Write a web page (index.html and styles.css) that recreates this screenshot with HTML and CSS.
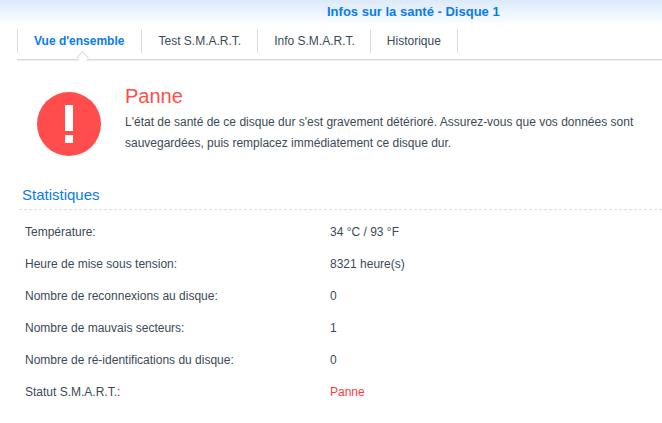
FILE: index.html
```html
<!DOCTYPE html>
<html lang="fr">
<head>
    <meta charset="UTF-8">
    <title>Infos sur la santé - Disque 1</title>
    <link rel="stylesheet" href="styles.css">
</head>
<body>
    <div class="title-bar">Infos sur la santé - Disque 1</div>

    <div class="tabs">
        <div class="tab active">Vue d'ensemble</div>
        <div class="tab">Test S.M.A.R.T.</div>
        <div class="tab">Info S.M.A.R.T.</div>
        <div class="tab">Historique</div>
    </div>

    <div class="alert">
        <svg class="alert-icon" width="64" height="64" viewBox="0 0 64 64">
            <circle cx="32" cy="32" r="32" fill="#ff4d4d"/>
            <rect x="28" y="13" width="8" height="26" fill="#fff"/>
            <rect x="28" y="43" width="8" height="8" fill="#fff"/>
        </svg>
        <div class="alert-text">
            <div class="alert-title">Panne</div>
            <p>L'état de santé de ce disque dur s'est gravement détérioré. Assurez-vous que vos données sont sauvegardées, puis remplacez immédiatement ce disque dur.</p>
        </div>
    </div>

    <h2 class="section-title">Statistiques</h2>

    <div class="stats">
        <div class="stat-label">Température:</div>
        <div>34 °C / 93 °F</div>
        <div class="stat-label">Heure de mise sous tension:</div>
        <div>8321 heure(s)</div>
        <div class="stat-label">Nombre de reconnexions au disque:</div>
        <div>0</div>
        <div class="stat-label">Nombre de mauvais secteurs:</div>
        <div>1</div>
        <div class="stat-label">Nombre de ré-identifications du disque:</div>
        <div>0</div>
        <div class="stat-label">Statut S.M.A.R.T.:</div>
        <div class="stat-bad">Panne</div>
    </div>
</body>
</html>
```

FILE: styles.css
```css
body {
    margin: 0;
    height: 423px;
    overflow: hidden;
    background: #fff;
    color: #3b4a57;
    font-family: "Liberation Sans", Arial, sans-serif;
    font-size: 12px;
}

.title-bar {
    height: 26px;
    padding-top: 4px;
    box-sizing: border-box;
    padding-left: 327px;
    background: linear-gradient(#dbeafa, #fff);
    color: #0a7ce6;
    font-size: 13px;
    font-weight: bold;
    line-height: 16px;
}

.tabs {
    display: flex;
    position: relative;
    height: 30px;
    margin-left: 17px;
    padding-top: 3px;
    border-bottom: 1px solid #d6d9dc;
    box-shadow: 0 1px 0 #eee;
}

.tab {
    height: 24px;
    padding: 0 16px;
    border-right: 1px solid #d3dde6;
    line-height: 25px;
}

.tab:first-child {
    border-left: 1px solid #d3dde6;
    padding-right: 17px;
}

.tab:nth-child(3) {
    padding-right: 15px;
}

.tab.active {
    color: #0a7ce6;
    font-weight: bold;
}

/* little notch under the active tab */
.tab.active::after {
    content: "";
    position: absolute;
    left: 61px;
    top: 27px;
    width: 8px;
    height: 8px;
    background: #fff;
    border-top: 1px solid #d6d9dc;
    border-left: 1px solid #d6d9dc;
    transform: rotate(45deg);
}

.alert {
    display: flex;
    margin-top: 32px;
    padding-left: 37px;
}

.alert-icon {
    flex: none;
}

.alert-text {
    margin-left: 24px;
    margin-top: -9px;
}

.alert-title {
    color: #ff4d4d;
    font-size: 20px;
    line-height: 26px;
}

.alert-text p {
    margin: 3px 0 0;
    line-height: 21px;
}

.section-title {
    margin: 29px 0 0 19px;
    padding: 0 0 4px 3px;
    border-bottom: 1px dashed #d8e0e8;
    color: #0a7ce6;
    font-size: 15px;
    font-weight: normal;
    line-height: 20px;
}

.stats {
    display: grid;
    grid-template-columns: 305px 1fr;
    grid-auto-rows: 32px;
    margin-top: 6px;
    padding-left: 25px;
    line-height: 32px;
}

.stat-bad {
    color: #f93d3d;
}
```
